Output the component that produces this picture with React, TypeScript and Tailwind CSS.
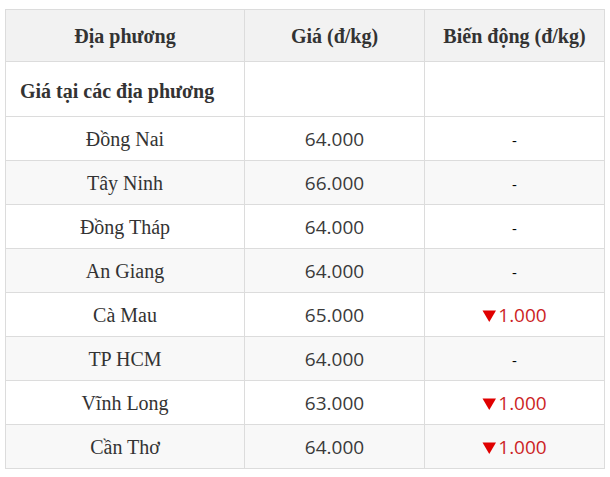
const rows = [
  { name: "Đồng Nai", price: "64.000", change: null },
  { name: "Tây Ninh", price: "66.000", change: null },
  { name: "Đồng Tháp", price: "64.000", change: null },
  { name: "An Giang", price: "64.000", change: null },
  { name: "Cà Mau", price: "65.000", change: "1.000" },
  { name: "TP HCM", price: "64.000", change: null },
  { name: "Vĩnh Long", price: "63.000", change: "1.000" },
  { name: "Cần Thơ", price: "64.000", change: "1.000" },
];

const serif = "font-['Liberation_Serif',serif]";
const sans = "font-['Open_Sans',sans-serif]";

export default function App() {
  return (
    <div className="bg-white pl-[5px] pt-[9px] w-[610px] h-[477px]">
      <table className="w-[600px] border-collapse table-fixed text-[#333]">
        <colgroup>
          <col className="w-[239px]" />
          <col className="w-[180px]" />
          <col className="w-[180px]" />
        </colgroup>
        <thead>
          <tr className={`bg-[#f2f2f2] h-[52px] ${serif} text-[20px] font-bold`}>
            <th className="border border-[#dcdcdc] text-center">Địa phương</th>
            <th className="border border-[#dcdcdc] text-center">Giá (đ/kg)</th>
            <th className="border border-[#dcdcdc] text-center">Biến động (đ/kg)</th>
          </tr>
        </thead>
        <tbody>
          <tr className="h-[55px] bg-white">
            <td className={`border border-[#dcdcdc] pl-[14px] pt-[4px] ${serif} text-[20px] font-bold`}>
              Giá tại các địa phương
            </td>
            <td className="border border-[#dcdcdc]"></td>
            <td className="border border-[#dcdcdc]"></td>
          </tr>
          {rows.map((r, i) => (
            <tr key={r.name} className={`h-[44px] ${i % 2 === 1 ? "bg-[#f8f8f8]" : "bg-white"}`}>
              <td className={`border border-[#dcdcdc] text-center pt-[1px] ${serif} text-[20px]`}>{r.name}</td>
              <td className={`border border-[#dcdcdc] text-center pt-[2px] ${sans} text-[19px] text-[#3a3a3a]`}>
                {r.price}
              </td>
              <td className={`border border-[#dcdcdc] text-center pt-[2px] ${sans}`}>
                {r.change ? (
                  <span className="inline-flex items-center text-[19px] text-[#cc1f26]">
                    <svg width="15" height="14" viewBox="0 0 15 14" className="mr-[1px]">
                      <polygon points="0.5,1.5 14,1.5 7.25,13" fill="#e00000" />
                    </svg>
                    {r.change}
                  </span>
                ) : (
                  <span className="text-[15px] text-black">-</span>
                )}
              </td>
            </tr>
          ))}
        </tbody>
      </table>
    </div>
  );
}
